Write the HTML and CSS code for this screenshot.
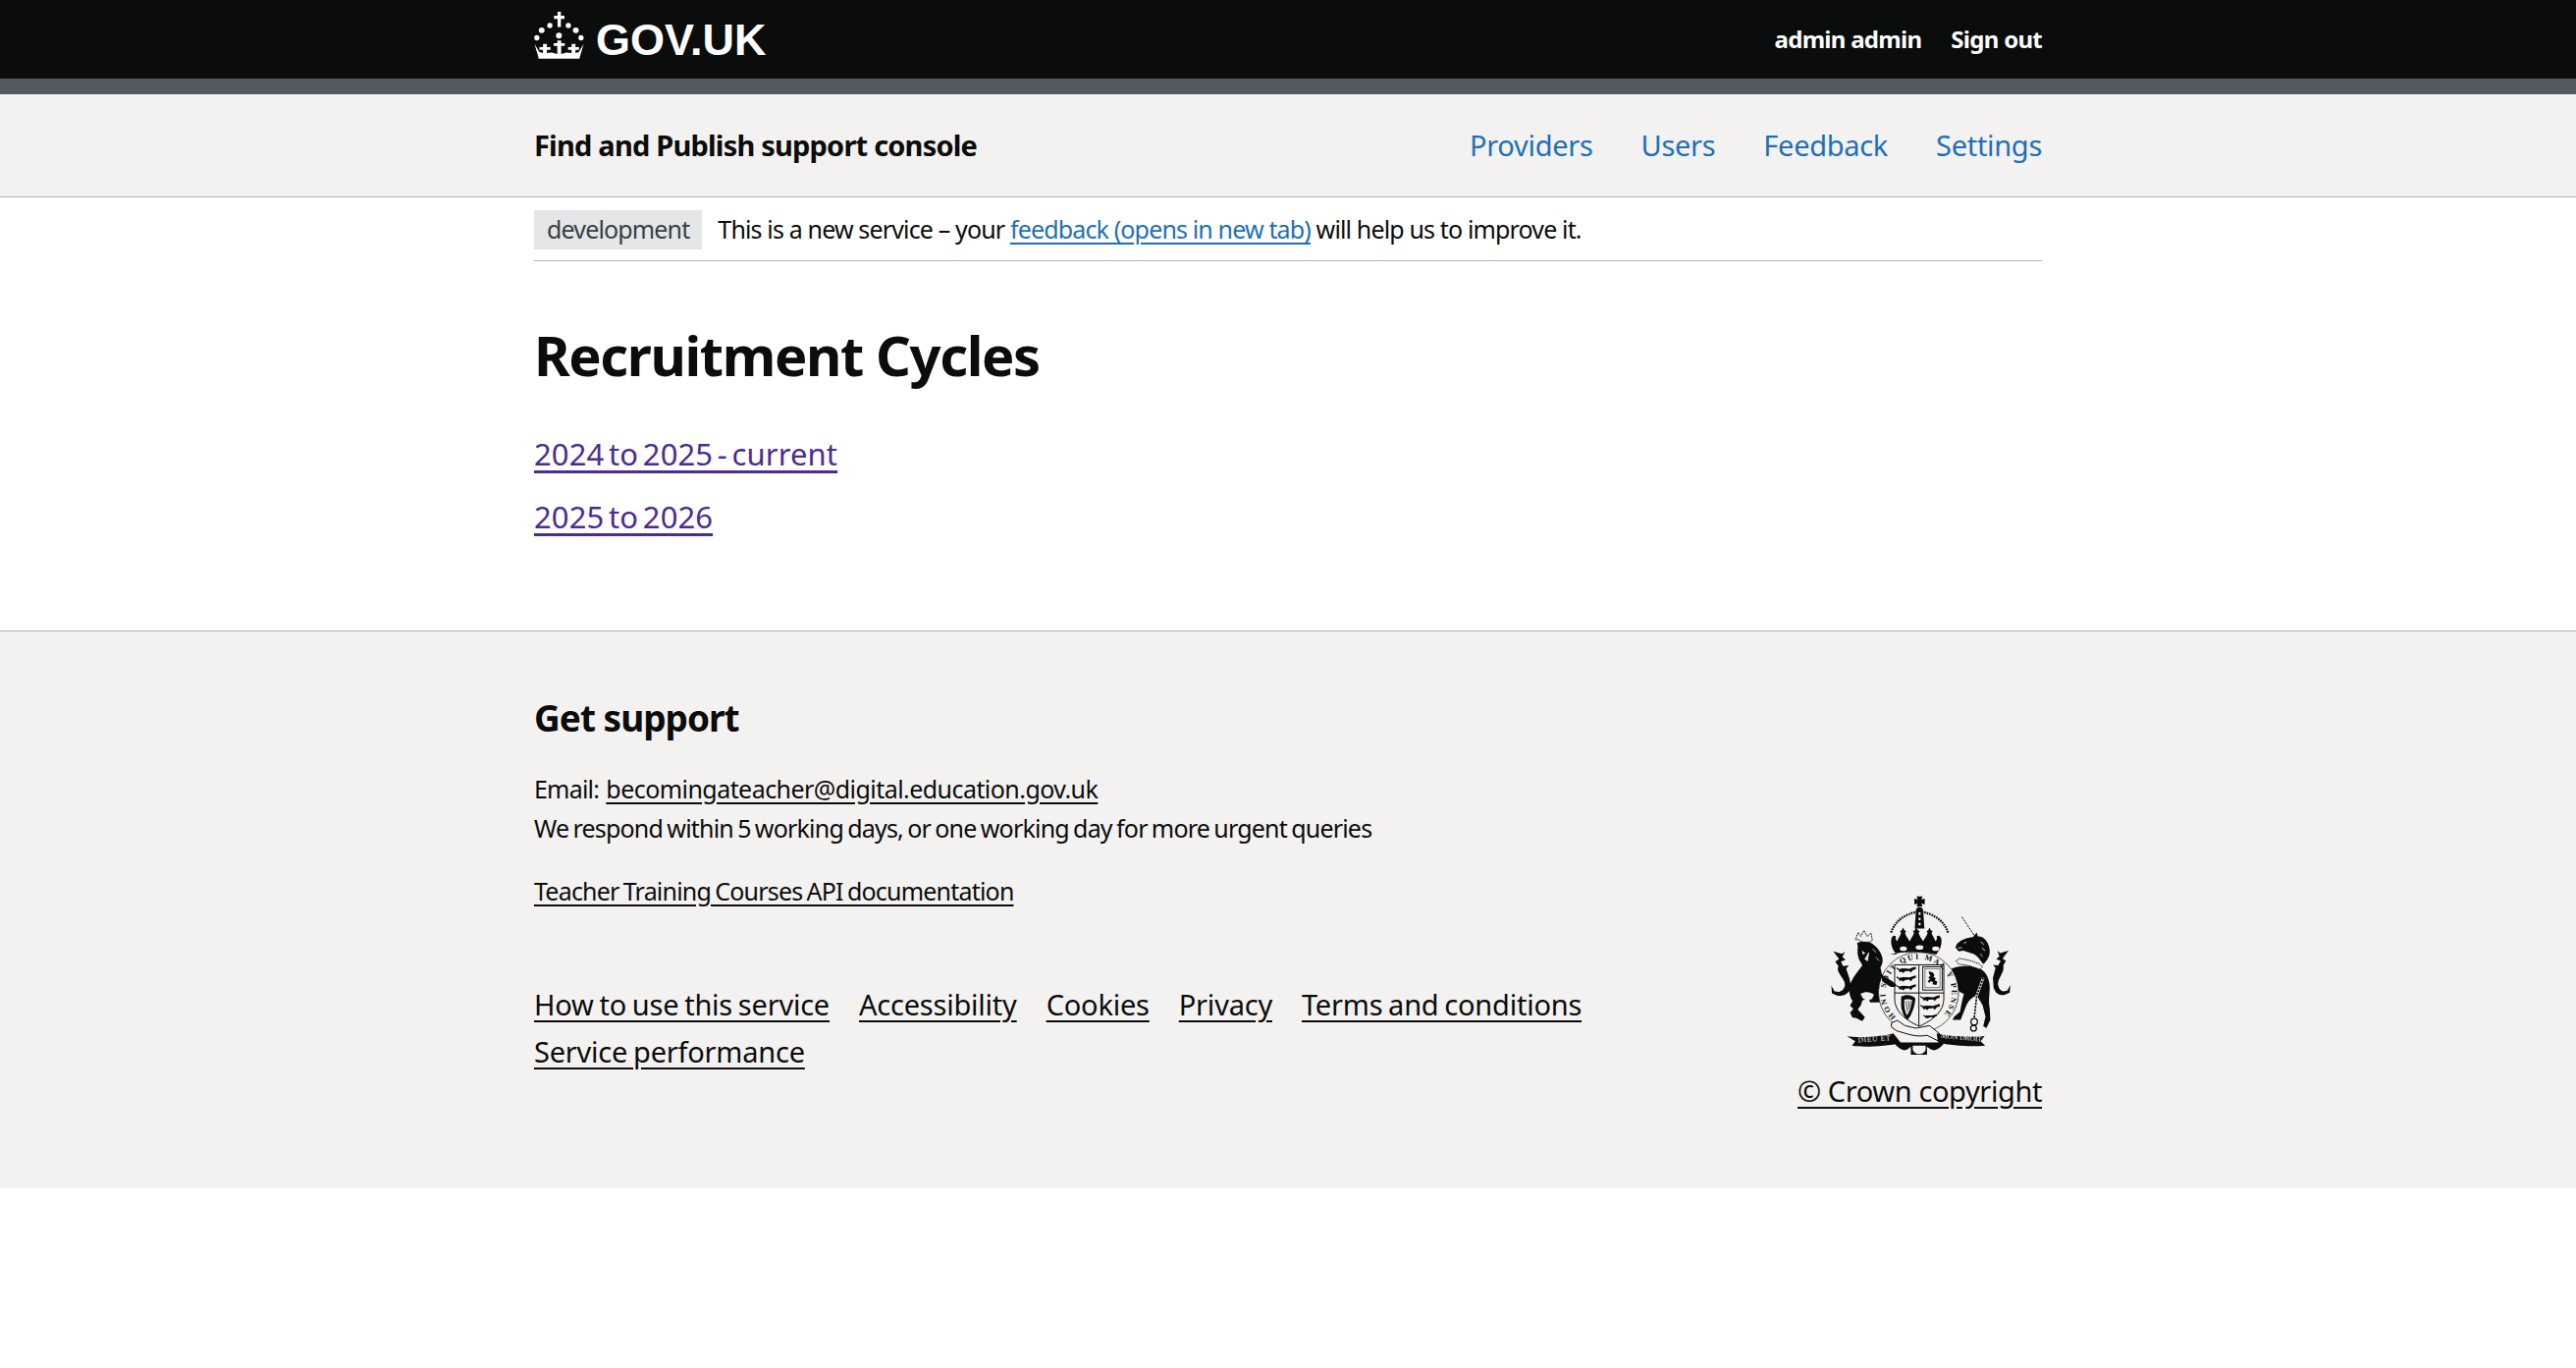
FILE: index.html
```html
<!DOCTYPE html>
<html lang="en">
<head>
<meta charset="utf-8">
<title>Recruitment Cycles</title>
<link rel="stylesheet" href="styles.css">
</head>
<body>
<header class="topbar">
  <div class="wrap topbar-inner">
    <a class="logo" href="#">
      <svg class="crown" viewBox="42 33 153 145" aria-hidden="true">
        <g fill="#fff">
          <path d="M114 33h10v12h11v10h-11v25h-10V55h-11V45h11z"/>
          <circle cx="90" cy="75" r="8"/><circle cx="147" cy="75" r="8"/>
          <circle cx="65" cy="90" r="9"/><circle cx="170" cy="90" r="9"/>
          <circle cx="118" cy="106" r="9"/>
          <circle cx="50" cy="113" r="8"/><circle cx="186" cy="113" r="8"/>
          <path d="M56 177H181L194 132 179 157 169 160V150H180V142H169V132H157V142H146V150H157V160L140 158 125 163V138H136V130H125V121H113V130H102V138H113V163L96 158 81 160V150H92V142H81V132H69V142H58V150H69V160L58 157 43 132Z"/>
        </g>
      </svg>
      <span class="logo-text">GOV.UK</span>
    </a>
    <nav class="user-nav">
      <a href="#">admin admin</a>
      <a href="#">Sign out</a>
    </nav>
  </div>
</header>
<div class="stripe"></div>
<div class="service-bar">
  <div class="wrap service-inner">
    <a class="service-name" href="#">Find and Publish support console</a>
    <nav class="service-nav">
      <a href="#">Providers</a>
      <a href="#">Users</a>
      <a href="#">Feedback</a>
      <a href="#">Settings</a>
    </nav>
  </div>
</div>
<div class="wrap">
  <div class="phase">
    <strong class="tag">development</strong>
    <span class="phase-text">This is a new service – your <a href="#">feedback (opens in new tab)</a> will help us to improve it.</span>
  </div>
  <main class="main">
    <h1>Recruitment Cycles</h1>
    <p class="cycle"><a href="#">2024 to 2025 - current</a></p>
    <p class="cycle"><a href="#">2025 to 2026</a></p>
  </main>
</div>
<footer class="footer">
  <div class="wrap">
    <h2>Get support</h2>
    <p class="support">Email: <a class="email" href="#">becomingateacher@digital.education.gov.uk</a><br>We respond within 5 working days, or one working day for more urgent queries</p>
    <p class="support api"><a href="#">Teacher Training Courses API documentation</a></p>
    <div class="foot-row">
      <ul class="foot-links">
        <li><a href="#">How to use this service</a></li>
        <li><a href="#">Accessibility</a></li>
        <li><a href="#">Cookies</a></li>
        <li><a href="#">Privacy</a></li>
        <li><a href="#">Terms and conditions</a></li>
        <li><a href="#">Service performance</a></li>
      </ul>
      <div class="crest-col">
        <svg class="crest" viewBox="10 36 564 492" aria-hidden="true">
          <!-- lion -->
          <path d="M95 172l8-22 8 12 10-18 10 18 12-10 4 22c-6 8-36 8-42-2z" fill="#f3f2f1" stroke="#0b0c0c" stroke-width="3" stroke-dasharray="4 2"/>
          <path d="M100 182c10-4 30-4 42 0 14 8 30 24 36 46 2 10 0 20-6 30l4 20 34 22 14 12c-4 8-14 8-22 4l-16-10-22 22 26 22-10 16c-14-2-26 2-40 0l-4-12-20 6-4 14-10 14 22 24-8 12c-14-6-22-12-30-10l-8-16 10-12-10-10 8-14c-12-16-14-42-4-60 8-18 24-36 34-50-8-12-18-30-14-56z" fill="#0b0c0c"/>
          <path d="M116 208l8 6-6 3zM136 212l-4 26-8-6zM148 200l10 12M158 226l10 12M108 238l6 12" fill="#f3f2f1" stroke="#f3f2f1" stroke-width="2"/>
          <path d="M110 340c14-8 30-8 42 2l-6 14-16 4-12-6z" fill="#f3f2f1"/>
          <path d="M26 208l26 8 10-6-8 16 10 8-14 6 6 14 18-2-8 10 10 30 6 30c-8 16-26 28-46 22l-14-6-2-24 10 18 14 2c8-2 16-8 18-20 2-12-8-22-16-36-6-8-8-16-4-24l-10-14 12-8z" fill="#0b0c0c"/>

          <!-- unicorn -->
          <path d="M424 102l40 60" stroke="#0b0c0c" stroke-width="3" stroke-dasharray="7 3" fill="none"/>
          <path d="M372 290L392 262C405 255 440 250 470 258 495 265 510 290 510 320 510 345 505 360 510 385L512 420 500 445 490 440 497 410 488 375 470 345C455 350 445 360 438 375L420 420 395 420 400 410 418 395 425 360 430 340C415 335 400 320 395 295L385 300Z" fill="#0b0c0c"/>
          <path d="M404 196L408 186C420 172 440 166 458 164L470 150 473 162C492 160 508 180 510 205 511 222 503 236 490 248L478 232C470 222 462 216 452 214L428 206 414 208Z" fill="#0b0c0c"/>
          <path d="M430 183l8-3M412 198l12-1M482 178l10 10M486 198l10 8M480 216l8 8" stroke="#f3f2f1" stroke-width="2.5" fill="none"/>
          <path d="M406 238l10-8 30 6 30 10 12 10-8 8-36-12-30-4z" fill="#f3f2f1" stroke="#0b0c0c" stroke-width="3" stroke-dasharray="4 2"/>
          <path d="M490 290L470 345 462 415" fill="none" stroke="#f3f2f1" stroke-width="8"/>
          <path d="M490 290L470 345 462 415" fill="none" stroke="#0b0c0c" stroke-width="5" stroke-dasharray="7 3"/>
          <circle cx="462" cy="426" r="10" fill="#f3f2f1" stroke="#0b0c0c" stroke-width="4"/>
          <circle cx="460" cy="446" r="9" fill="#f3f2f1" stroke="#0b0c0c" stroke-width="4"/>
          <path d="M568 206l-26 8-8-8 6 18-10 8 14 6-8 14-16-2 8 10-8 30 2 30c4 16 18 28 36 22l14-6 2-24-10 18-12 2c-8-2-14-8-16-20-2-12 6-22 12-36 4-8 6-16 4-24l8-14-10-8z" fill="#0b0c0c"/>

          <!-- garter and shield -->
          <circle cx="290" cy="335" r="124" fill="#f3f2f1" stroke="#0b0c0c" stroke-width="2"/>
          <path d="M216 250h152v104c0 42-36 68-76 86-40-18-76-44-76-86z" fill="#f3f2f1" stroke="#0b0c0c" stroke-width="3"/>
          <path d="M291 250v190M216 337h152" stroke="#0b0c0c" stroke-width="3" fill="none"/>
          <path id="garter" class="garter-path" d="M220 411A103 103 0 1 1 360 411"/>
          <text class="garter-text"><textPath href="#garter" textLength="480">HONI SOIT QUI MAL Y PENSE</textPath></text>
          <g fill="#0b0c0c">
            <path id="passant" d="M222 258l7 5 13-2 20 1 11-4 9-2-1 8-8 2-7 8-5-5-13 1-5 5-6-4-6 2-2-6-7-4z"/>
            <use href="#passant" y="27"/>
            <use href="#passant" y="54"/>
            <use href="#passant" x="74" y="88"/>
            <use href="#passant" x="74" y="115"/>
            <use href="#passant" transform="translate(304 404) scale(.72) translate(-222 -258)"/>
          </g>
          <rect x="303" y="256" width="60" height="72" fill="none" stroke="#0b0c0c" stroke-width="3"/>
          <rect x="310" y="263" width="46" height="58" fill="none" stroke="#0b0c0c" stroke-width="1.5"/>
          <path d="M322 270l12 4 5 7-3 6 7 4-3 7 8 4-3 10-12-2 2-7-9-2-3 5-5-5 7-7-5-5 7-5-5-7z" fill="#0b0c0c"/>
          <path d="M236 348c14-8 36-6 44 6-2 24-10 50-24 66-10-6-20-28-20-48 0-10 0-18 0-24z" fill="#0b0c0c"/>
          <path d="M246 358c8-2 18-2 24 2-2 18-8 34-16 46-6-10-10-30-8-48z" fill="#f3f2f1"/>
          <path d="M250 362l6 34M258 360l2 28M265 362l-1 18" stroke="#0b0c0c" stroke-width="2" fill="none"/>

          <!-- paws over the shield -->
          <path d="M172 278l36 22 14 12c-4 8-14 8-22 4l-22-14z" fill="#0b0c0c"/>

          <!-- crown -->
          <g fill="#0b0c0c" transform="translate(0 -8)">
            <path d="M284 46h18l-3 10 10-3v18l-10-3 3 10h-18l3-10-10 3V53l10 3z"/>
            <path d="M282 88c2-5 6-8 11-8s9 3 11 8l4 58h-30z"/>
            <path d="M222 226c-10-12-20-28-16-50 3-8 9-10 14-6-2 7 0 12 4 15 3-10 10-16 12-26l-4-5 6-3 4-8 4 8 6 3-4 5c2 10 8 15 14 26 4-8 10-14 14-26l-4-5 6-3 5-9 5 9 6 3-4 5c3 11 9 18 14 26 6-11 12-16 14-26l-4-5 6-3 4-8 4 8 6 3-4 5c2 10 9 16 12 26 4-3 6-8 4-15 5-4 11-2 14 6 4 22-6 38-16 50-40-10-100-10-144 0z"/>
          </g>
          <path d="M205 150c12-36 44-58 82-64M381 150c-12-36-44-58-82-64" fill="none" stroke="#0b0c0c" stroke-width="7" stroke-dasharray="5 3"/>
          <path d="M293 88v8M293 104v8M293 120v8" stroke="#f3f2f1" stroke-width="6" fill="none"/>
          <g fill="#f3f2f1">
            <ellipse cx="243" cy="200" rx="11" ry="7"/><ellipse cx="293" cy="196" rx="12" ry="7"/><ellipse cx="343" cy="200" rx="11" ry="7"/>
          </g>

          <!-- base and mottos -->
          <path d="M214 490c8 14 24 24 32 24 8 0 14-6 20-10v24h50v-24c6 4 14 10 22 10 8 0 24-10 32-24z" fill="#0b0c0c"/>
          <path d="M272 500v10c0 10 10 16 20 16s20-6 20-16v-10z" fill="#f3f2f1"/>
          <path d="M206 430l18-8 24 16 34 8 42-8 32 26-4 22-36-18c-20 4-40 2-60-4l-34-10-16-12z" fill="#f3f2f1" stroke="#0b0c0c" stroke-width="3"/>
          <path d="M68 470c24 6 104 4 144-8l24 30c-48 10-118 14-152 8l10-14z" fill="#0b0c0c"/>
          <path d="M346 462c40 10 100 12 148 8l-12 16 14 14c-44 4-106 0-146-10z" fill="#0b0c0c"/>
          <text class="motto" x="103" y="490" transform="rotate(-4 103 490)" textLength="100">DIEU ET</text>
          <text class="motto" x="358" y="476" transform="rotate(5 358 476)" textLength="128">MON DROIT</text>
        </svg>
        <a class="copyright" href="#">© Crown copyright</a>
      </div>
    </div>
  </div>
</footer>
</body>
</html>
```
FILE: styles.css
```css
* { box-sizing: border-box; }
html, body { margin: 0; padding: 0; background: #fff; }
body { font-family: "Noto Sans", "Open Sans", sans-serif; color: #0b0c0c; }
a { color: inherit; }
.wrap { width: 1536px; margin: 0 auto; }
.topbar { background: #0b0c0c; height: 80px; }
.topbar-inner { display: flex; justify-content: space-between; align-items: center; height: 80px; }
.logo { display: flex; align-items: center; gap: 12px; color: #fff; text-decoration: none; }
.crown { width: 51px; height: 48px; margin-top: -8px; }
.logo-text { font: 700 45px/1 "Liberation Sans", Arial, sans-serif; }
.user-nav { display: flex; gap: 30px; margin-bottom: 2px; }
.user-nav a { color: #fff; font-weight: 700; font-size: 24px; letter-spacing: -0.72px; text-decoration: none; }
.stripe { height: 16px; background: #505a5f; }
.service-bar { background: #f3f2f1; height: 105px; border-bottom: 1px solid #b1b4b6; }
.service-inner { display: flex; justify-content: space-between; align-items: center; height: 102px; }
.service-name { font-size: 29px; font-weight: 700; letter-spacing: -0.8px; text-decoration: none; }
.service-nav { display: flex; gap: 49px; }
.service-nav a { color: #1d70b8; font-size: 29px; letter-spacing: -0.3px; text-decoration: none; }
.phase { display: flex; align-items: center; gap: 16px; height: 65px; padding-top: 2px; border-bottom: 1px solid #b1b4b6; font-size: 25px; letter-spacing: -0.85px; }
.phase-text { margin-bottom: 2px; }
.phase a { color: #1d70b8; text-underline-offset: 4px; }
.tag { background: #e5e6e7; color: #383f43; font-weight: 400; padding: 0 13px; height: 40px; line-height: 38px; }
.main { padding-top: 61px; height: 376px; }
h1 { margin: 0 0 47px; font-size: 56px; line-height: 68px; font-weight: 700; letter-spacing: -1.4px; }
.cycle { margin: 0 0 24px; font-size: 31px; line-height: 40px; letter-spacing: 0.1px; word-spacing: -3.5px; }
.cycle a { color: #4c2c92; text-underline-offset: 5px; }
.footer { background: #f3f2f1; border-top: 1px solid #b1b4b6; height: 568px; padding-top: 63px; }
h2 { margin: 0 0 27px; font-size: 37px; line-height: 50px; letter-spacing: -1px; }
.support { margin: 0; font-size: 25px; line-height: 40px; letter-spacing: -0.8px; word-spacing: -1.5px; }
.support a { text-underline-offset: 4px; }
.support .email { letter-spacing: -0.55px; margin-left: 3px; }
.api { margin-top: 24px; }
.foot-row { display: flex; justify-content: space-between; align-items: flex-start; }
.foot-links { list-style: none; margin: 76px 0 0; padding: 0; width: 1080px; display: flex; flex-wrap: wrap; column-gap: 30px; row-gap: 8px; font-size: 29px; line-height: 40px; letter-spacing: -0.22px; word-spacing: -1.5px; }
.foot-links a { text-underline-offset: 5px; }
.crest-col { display: flex; flex-direction: column; align-items: center; margin-top: -15px; }
.crest { width: 186px; height: 162px; }
.copyright { font-size: 29px; line-height: 40px; letter-spacing: -0.4px; margin-top: 17px; text-underline-offset: 5px; }
.garter-path { fill: none; }
.garter-text { font: 700 24px "Liberation Serif", serif; fill: #0b0c0c; }
.motto { font: 400 23px "Liberation Serif", serif; fill: #f3f2f1; }
```
